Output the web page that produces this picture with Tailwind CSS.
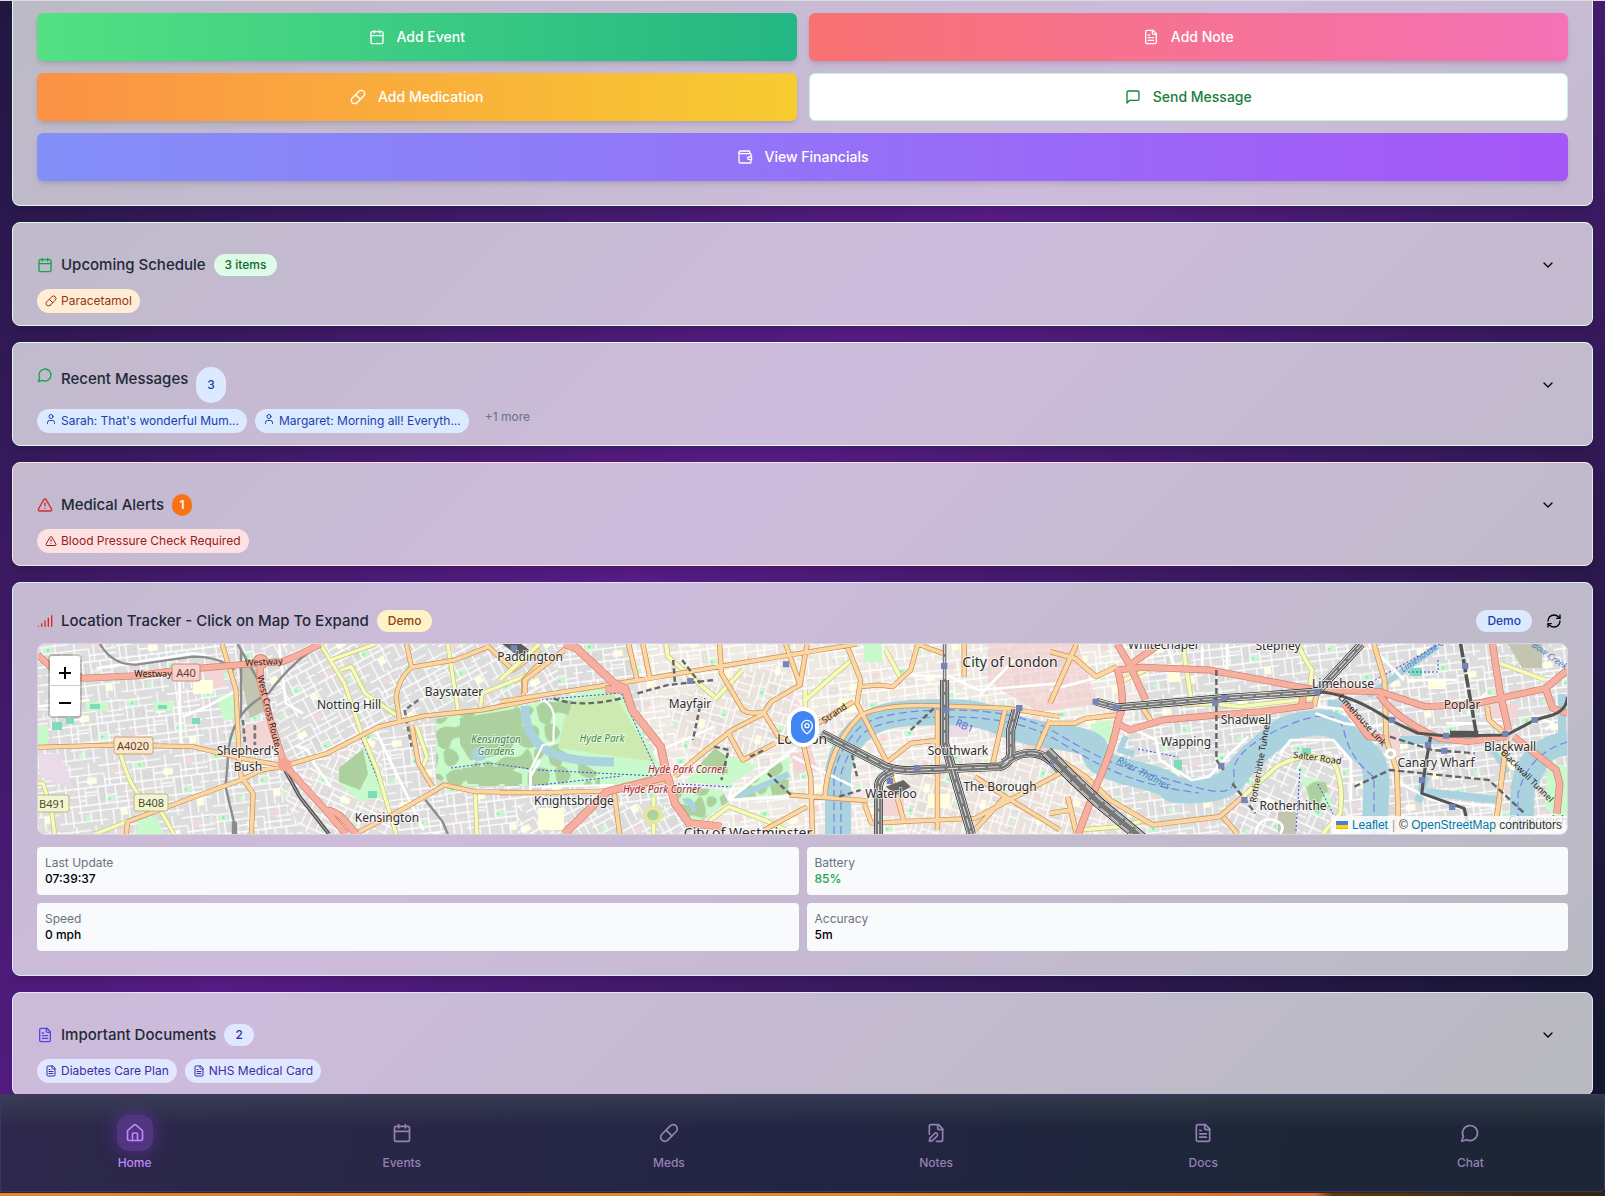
<!DOCTYPE html>
<html lang="en">
<head>
<meta charset="utf-8">
<meta name="viewport" content="width=device-width, initial-scale=1">
<title>Care Dashboard</title>
<script src="https://cdn.jsdelivr.net/npm/@tailwindcss/browser@4"></script>
</head>
<body class="font-['Inter','Noto_Sans',sans-serif] text-black">

<!-- Icon sprite -->
<svg class="hidden" aria-hidden="true">
  <symbol id="calendar" viewBox="0 0 24 24"><path d="M8 2v4M16 2v4M3 10h18"/><rect x="3" y="4" width="18" height="18" rx="2"/></symbol>
  <symbol id="pill" viewBox="0 0 24 24"><path d="m10.5 20.5 10-10a4.95 4.95 0 1 0-7-7l-10 10a4.95 4.95 0 1 0 7 7Z"/><path d="m8.5 8.5 7 7"/></symbol>
  <symbol id="file-text" viewBox="0 0 24 24"><path d="M15 2H6a2 2 0 0 0-2 2v16a2 2 0 0 0 2 2h12a2 2 0 0 0 2-2V7Z"/><path d="M14 2v4a2 2 0 0 0 2 2h4M10 9H8M16 13H8M16 17H8"/></symbol>
  <symbol id="message-square" viewBox="0 0 24 24"><path d="M21 15a2 2 0 0 1-2 2H7l-4 4V5a2 2 0 0 1 2-2h14a2 2 0 0 1 2 2z"/></symbol>
  <symbol id="wallet" viewBox="0 0 24 24"><path d="M19 7V4a1 1 0 0 0-1-1H5a2 2 0 0 0 0 4h15a1 1 0 0 1 1 1v4h-3a2 2 0 0 0 0 4h3a1 1 0 0 0 1-1v-2a1 1 0 0 0-1-1"/><path d="M3 5v14a2 2 0 0 0 2 2h15a1 1 0 0 0 1-1v-4"/></symbol>
  <symbol id="message-circle" viewBox="0 0 24 24"><path d="M7.9 20A9 9 0 1 0 4 16.1L2 22Z"/></symbol>
  <symbol id="user" viewBox="0 0 24 24"><path d="M19 21v-2a4 4 0 0 0-4-4H9a4 4 0 0 0-4 4v2"/><circle cx="12" cy="7" r="4"/></symbol>
  <symbol id="alert" viewBox="0 0 24 24"><path d="m21.73 18-8-14a2 2 0 0 0-3.48 0l-8 14A2 2 0 0 0 4 21h16a2 2 0 0 0 1.73-3"/><path d="M12 9v4M12 17h.01"/></symbol>
  <symbol id="signal" viewBox="0 0 24 24"><path d="M2 20h.01M7 20v-4M12 20v-8M17 20V8M22 4v16"/></symbol>
  <symbol id="refresh" viewBox="0 0 24 24"><path d="M3 12a9 9 0 0 1 9-9 9.75 9.75 0 0 1 6.74 2.74L21 8"/><path d="M21 3v5h-5M21 12a9 9 0 0 1-9 9 9.75 9.75 0 0 1-6.74-2.74L3 16"/><path d="M8 16H3v5"/></symbol>
  <symbol id="house" viewBox="0 0 24 24"><path d="M15 21v-8a1 1 0 0 0-1-1h-4a1 1 0 0 0-1 1v8"/><path d="M3 10a2 2 0 0 1 .709-1.528l7-5.999a2 2 0 0 1 2.582 0l7 5.999A2 2 0 0 1 21 10v9a2 2 0 0 1-2 2H5a2 2 0 0 1-2-2z"/></symbol>
  <symbol id="file-pen" viewBox="0 0 24 24"><path d="M12.5 22H18a2 2 0 0 0 2-2V7l-5-5H6a2 2 0 0 0-2 2v9.500"/><path d="M14 2v4a2 2 0 0 0 2 2h4"/><path d="M13.378 15.626a1 1 0 1 0-3.004-3.004l-5.01 5.012a2 2 0 0 0-.506.854l-.837 2.87a.5.5 0 0 0 .62.62l2.87-.837a2 2 0 0 0 .854-.506z"/></symbol>
  <symbol id="map-pin" viewBox="0 0 24 24"><path d="M20 10c0 4.993-5.539 10.193-7.399 11.799a1 1 0 0 1-1.202 0C9.539 20.193 4 14.993 4 10a8 8 0 0 1 16 0"/><circle cx="12" cy="10" r="3"/></symbol>
  <symbol id="chevron" viewBox="0 0 24 24"><path d="m6 9 6 6 6-6"/></symbol>
</svg>

<div class="flex h-screen flex-col overflow-hidden border-t border-[#dcdcdc] bg-[linear-gradient(135deg,#0f172a_-14%,#581c87_43%,#0f172a_99%)]">
  <main class="flex min-h-0 flex-1 flex-col gap-4 overflow-y-auto px-3 [scrollbar-width:none]">

    <!-- Quick actions -->
    <section aria-label="Quick actions" class="grid shrink-0 grid-cols-2 gap-3 rounded-b-lg border-x border-b border-[#dcfce7] bg-white/70 px-6 pt-3 pb-6 text-sm font-medium shadow-lg">
      <button class="flex h-12 items-center justify-center gap-3 rounded-md bg-linear-to-r/srgb from-[#54e083] to-[#24b683] text-white shadow-md"><svg class="size-4 fill-none stroke-current stroke-2" stroke-linecap="round" stroke-linejoin="round"><use href="#calendar"/></svg>Add Event</button>
      <button class="flex h-12 items-center justify-center gap-3 rounded-md bg-linear-to-r/srgb from-[#f87272] to-[#f472b6] text-white shadow-md"><svg class="size-4 fill-none stroke-current stroke-2" stroke-linecap="round" stroke-linejoin="round"><use href="#file-text"/></svg>Add Note</button>
      <button class="flex h-12 items-center justify-center gap-3 rounded-md bg-linear-to-r/srgb from-[#fb9146] to-[#f7cc30] text-white shadow-md"><svg class="size-4 fill-none stroke-current stroke-2" stroke-linecap="round" stroke-linejoin="round"><use href="#pill"/></svg>Add Medication</button>
      <button class="flex h-12 items-center justify-center gap-3 rounded-md border border-[#bbf7d0] bg-white text-[#15803d]"><svg class="size-4 fill-none stroke-current stroke-2" stroke-linecap="round" stroke-linejoin="round"><use href="#message-square"/></svg>Send Message</button>
      <button class="col-span-2 flex h-12 items-center justify-center gap-3 rounded-md bg-linear-to-r/srgb from-[#838ff8] to-[#a556f7] text-white shadow-md"><svg class="size-4 fill-none stroke-current stroke-2" stroke-linecap="round" stroke-linejoin="round"><use href="#wallet"/></svg>View Financials</button>
    </section>

    <!-- Upcoming schedule -->
    <section class="flex shrink-0 flex-col gap-1.5 rounded-lg border border-[#dcfce7] bg-white/70 px-6 pt-6 pb-3 shadow-lg">
      <div class="flex h-9 items-center gap-2">
        <svg class="size-4 fill-none stroke-[#16a34a] stroke-2" stroke-linecap="round" stroke-linejoin="round"><use href="#calendar"/></svg>
        <h2 class="text-[15px] leading-6 font-medium text-[#1f2937]">Upcoming Schedule</h2>
        <span class="rounded-full bg-[#dcfce7] px-[11px] py-[3px] text-xs font-medium text-[#166534]">3 items</span>
        <button aria-label="Expand schedule" class="ml-auto flex h-9 w-10 items-center justify-center"><svg class="size-4 fill-none stroke-current stroke-2" stroke-linecap="round" stroke-linejoin="round"><use href="#chevron"/></svg></button>
      </div>
      <div class="flex gap-2 text-xs">
        <span class="flex items-center gap-1 rounded-full bg-[#ffedd5] px-2 py-1 text-[#9a3412]"><svg class="size-3 fill-none stroke-current stroke-2" stroke-linecap="round" stroke-linejoin="round"><use href="#pill"/></svg>Paracetamol</span>
      </div>
    </section>

    <!-- Recent messages -->
    <section class="flex shrink-0 flex-col gap-1.5 rounded-lg border border-[#dcfce7] bg-white/70 px-6 pt-6 pb-3 shadow-lg">
      <div class="flex h-9 gap-2">
        <svg class="size-4 fill-none stroke-[#16a34a] stroke-2" stroke-linecap="round" stroke-linejoin="round"><use href="#message-circle"/></svg>
        <h2 class="text-[15px] leading-6 font-medium text-[#1f2937]">Recent Messages</h2>
        <span class="flex items-center rounded-full bg-[#dbeafe] px-[11px] text-xs font-medium text-[#1e40af]">3</span>
        <button aria-label="Expand messages" class="ml-auto flex h-9 w-10 items-center justify-center"><svg class="size-4 fill-none stroke-current stroke-2" stroke-linecap="round" stroke-linejoin="round"><use href="#chevron"/></svg></button>
      </div>
      <div class="flex gap-2 text-xs">
        <span class="flex gap-1 rounded-full bg-[#dbeafe] px-2 py-1 text-[#1e40af]"><svg class="size-3 fill-none stroke-current stroke-2" stroke-linecap="round" stroke-linejoin="round"><use href="#user"/></svg>Sarah: That's wonderful Mum...</span>
        <span class="flex gap-1 rounded-full bg-[#dbeafe] px-2 py-1 text-[#1e40af]"><svg class="size-3 fill-none stroke-current stroke-2" stroke-linecap="round" stroke-linejoin="round"><use href="#user"/></svg>Margaret: Morning all! Everyth...</span>
        <span class="px-2 text-[#6b7280]">+1 more</span>
      </div>
    </section>

    <!-- Medical alerts -->
    <section class="flex shrink-0 flex-col gap-1.5 rounded-lg border border-[#fee2e2] bg-white/70 px-6 pt-6 pb-3 shadow-lg">
      <div class="flex h-9 items-center gap-2">
        <svg class="size-4 fill-none stroke-[#dc2626] stroke-2" stroke-linecap="round" stroke-linejoin="round"><use href="#alert"/></svg>
        <h2 class="text-[15px] leading-6 font-medium text-[#1f2937]">Medical Alerts</h2>
        <span class="w-5 rounded-full bg-[#f97316] py-[3px] text-center text-xs font-semibold text-white">1</span>
        <button aria-label="Expand alerts" class="ml-auto flex h-9 w-10 items-center justify-center"><svg class="size-4 fill-none stroke-current stroke-2" stroke-linecap="round" stroke-linejoin="round"><use href="#chevron"/></svg></button>
      </div>
      <div class="flex gap-2 text-xs">
        <span class="flex items-center gap-1 rounded-full bg-[#fee2e2] px-2 py-1 text-[#991b1b]"><svg class="size-3 fill-none stroke-current stroke-2" stroke-linecap="round" stroke-linejoin="round"><use href="#alert"/></svg>Blood Pressure Check Required</span>
      </div>
    </section>

    <!-- Location tracker -->
    <section class="flex shrink-0 flex-col rounded-lg border border-[#dbeafe] bg-white/70 p-6 shadow-lg">
      <div class="mb-2 flex h-7 items-center gap-2">
        <svg class="size-4 fill-none stroke-[#dc2626] stroke-2" stroke-linecap="round" stroke-linejoin="round"><use href="#signal"/></svg>
        <h2 class="text-[15px] leading-6 font-medium text-[#1f2937]">Location Tracker - Click on Map To Expand</h2>
        <span class="rounded-full bg-[#fef3c7] px-[11px] py-[3px] text-xs font-medium text-[#92400e]">Demo</span>
        <span class="ml-auto rounded-full bg-[#dbeafe] px-[11px] py-[3px] text-xs font-medium text-[#1e40af]">Demo</span>
        <button aria-label="Refresh location" class="flex size-7 items-center justify-center"><svg class="size-4 fill-none stroke-current stroke-2" stroke-linecap="round" stroke-linejoin="round"><use href="#refresh"/></svg></button>
      </div>

      <div class="relative h-48 overflow-hidden rounded-lg border border-[#d8d5e0] bg-[#e0dfdf]">
        <svg class="block size-full" viewBox="0 0 1529 190" preserveAspectRatio="xMidYMid slice" role="img" aria-label="Map of central London">
          <defs>
            <pattern id="st" width="96" height="78" patternUnits="userSpaceOnUse" patternTransform="rotate(-7) scale(.8)">
              <path fill="#c8facc" d="M6 6h10v7h-10zM60 44h12v6h-12zM34 64h6v6h-6z"/><path fill="#ffffe0" d="M40 18h12v8h-12zM78 60h8v9h-8z"/><path fill="#f2dad9" d="M70 8h9v7h-9zM12 46h8v6h-8z"/><path fill="#8fe0c0" d="M10 8h3v3h-3zM63 46h4v2h-4z"/>
              <path d="M0 5H38M0 14H62M0 30H96M4 40H50M0 52H96M24 60H96M0 72H60M4 5V30M12 14V52M20 0V14M28 14V72M36 30V52M44 0V30M52 30V78M56 4H96M62 14V52M68 0V30M76 16H96M74 30V60M82 0V30M84 40H96M88 30V78M68 60V78M78 60V78M8 52V72M17 52V78M40 60V72M92 4V16M28 22H44M62 22H96M36 36H52M62 42H74M28 46H36M74 46H88" stroke="#fff" stroke-width="1.600" fill="none"/>
              <path d="M16 20h8v6h-8zM55 34h4v12h-4zM92 50v8M22 64h4v6M46 66h3v5M84 6h8v6" stroke="#cfcdcb" stroke-width=".8" fill="none"/>
            </pattern>
            <pattern id="st2" href="#st" patternTransform="rotate(-28) scale(.8)"/>
            <pattern id="st3" href="#st" patternTransform="rotate(24) scale(.8)"/>
            <pattern id="st4" href="#st" patternTransform="rotate(-74) scale(.75)"/>
            <pattern id="wood" width="52" height="44" patternUnits="userSpaceOnUse" patternTransform="rotate(-14)"><path fill="#add19e" d="M0 6q8-6 16-2t14-2 6 9-10 8-14 2-12-1zM28 24q6-5 13-3t8 6-4 12-12 4-8-8zM3 27q5-4 9-1t5 8-6 8-9-5zM40 3q5-2 8 2t-3 7-7-3z"/></pattern>
          </defs>
          <rect width="1529" height="190" fill="#dedddd"/>
          <path fill="#efe9e4" d="M590 0H1120L1060 190H640L610 90Z"/>
          <rect width="1529" height="190" fill="url(#st)"/>
          <path fill="#dedddd" d="M225 0H520V50L355 80 250 125ZM480 160H660V190H480ZM1180 190L1190 150 1240 105 1300 110 1310 190Z"/>
          <path fill="url(#st2)" d="M225 0H520V50L355 80 250 125ZM480 160H660V190H480Z"/>
          <path fill="url(#st3)" d="M1180 190L1190 150 1240 105 1300 110 1310 190Z"/>
          <path fill="#e9e2dd" d="M628 55L740 20 770 75 690 130 640 100ZM870 115L1010 115 1100 190H870Z"/>
          <path fill="url(#st4)" d="M628 55L740 20 770 75 690 130 640 100ZM870 115L1010 115 1100 190H870Z"/>
          <path fill="#e3dfdf" d="M240 140L340 90 355 190H265Z"/><path fill="url(#st3)" d="M240 140L340 90 355 190H265Z"/>
          <path fill="#f2d5d5" d="M206 82l28-8 6 30-30 5zM165 28l18-4 5 18-14 3zM840 150h26v22h-26zM752 110l22-4 6 20-22 4zM990 96l26 6-4 16-26-6zM1450 60h30v14h-30zM1350 88h12v26h-12z"/>
          <path fill="#f0cccc" fill-opacity=".6" d="M950 0h90l20 60-60 8-50-30z"/>
          <path fill="#ebdbe8" d="M0 110h22l14 36-34-14zM905 75h25v18h-25z"/>
          <path fill="#c4c5b0" d="M200 20l22 6 8 40-18 8zM1470 0h34v24h-20zM1240 168h18v22h-18z"/>
          <path fill="#ffffe0" d="M155 36h20v14h-20zM500 164h26v22h-26zM1130 20h12v18h-12zM800 55h18v12h-18zM1390 35h18v10h-18zM890 150h22v14h-22z"/>

          <!-- parks -->
          <path fill="#c8facc" d="M398 75L460 64 506 58 560 44 585 52 620 118 628 132 562 142 420 142 398 135ZM647 138L677 104 690 112 720 122 690 142ZM696 154L706 142 752 112 750 150ZM636 142L684 146 690 158 662 178 646 170ZM301 124L325 105 336 110 348 152 322 158 301 138ZM100 176l18-4 8 18h-28zM48 58h22v9h-22zM115 58h20v9h-20zM178 52l18-3 8 24-18 4zM1052 80l20-4 6 20-20 2zM1262 132l26 6 6 26-18 4zM826 0h18v18h-18zM0 82h10v20h-10zM1510 120q12-2 19 4v50q-18 0-22-14z"/>
          <path fill="#cdebb0" d="M530 58L575 49 618 118 520 104Z"/>
          <path fill="url(#wood)" d="M398 75L460 64 506 58 535 56 520 104 562 130 562 142 420 142 398 135ZM696 154L706 142 752 112 750 150ZM636 142L684 146 690 158 662 178 646 170ZM1262 132l26 6 6 26-18 4z"/>
          <path fill="#add19e" d="M301 124L325 105 330 130 322 146 301 138ZM662 120L677 104 688 112 690 130ZM422 74l60-10 2 22-14 24-38 6-10-16zM424 124l40-2 20 8v10h-54z"/>
          <path fill="#7fdcb8" d="M330 147h9v7h-9zM14 78h10v8h-10zM28 74h8v6h-8zM52 60h10v5h-10zM120 61h9v4h-9zM154 74h8v6h-8zM1136 116h8v10h-8zM1372 24h12v8h-12zM1264 104h9v6h-9z"/>

          <!-- water -->
          <g fill="none" stroke="#aad3df" stroke-linejoin="round">
            <path stroke-width="26" d="M800 192V129Q803 105 819 89Q835 74 855 71T908 68T962 78T1022 93T1058 109T1093 129T1132 143T1161 146T1196 133T1221 106T1246 86T1274 79T1306 89T1327 109T1338 133T1336 190"/>
            <path stroke-width="24" d="M1484 190V160Q1484 125 1500 112T1530 100M1482 150L1505 105"/>
            <path stroke-width="9" d="M487 62Q487 90 505 104T576 118"/>
            <path stroke-width="6" d="M699 152Q726 142 751 130M646 158q8-4 10 10M1330 52L1400 2M1450 100L1470 128M1088 92L1082 106 1096 110"/>
            <path stroke-width="8" d="M1362 96H1440M1388 148L1460 156M1388 132L1380 158M1290 60h22M1524 50v40"/>
          </g>
          <ellipse cx="441" cy="110" rx="8" ry="7" fill="#aad3df"/>
          <g fill="none" stroke="#7d82e8" stroke-width="1.200" stroke-dasharray="8 4">
            <path d="M796 190V129Q802 105 819 86T908 66T1022 91T1093 125T1161 144T1196 131T1246 83T1306 87T1336 133V190M803 190V130Q808 112 822 93T908 73T1022 98T1093 134T1161 149"/>
            <path d="M1480 190V150Q1490 110 1529 98"/>
          </g>
          <g fill="none" stroke="#3a45e8" stroke-width="1" stroke-dasharray="2 2">
            <path d="M323 94L353 169M413 124L451 119 500 126 618 132M500 56L583 49 620 130M492 142L584 132M640 140L695 143M1330 40L1402 0M1370 28h30v-12M1280 140l24 48M1262 125l-4 62M1100 105l40 8"/>
          </g>

          <!-- western sheet -->
          <g transform="matrix(.3444 0 0 .3333 -38 -14)" fill="none" stroke-linejoin="round">
            <path stroke="#fff" stroke-width="8" d="M280 115L560 70 600 75M520 120L525 340M530 260L600 230 690 180M810 42L830 220 880 250M1090 300L1230 600M110 230L260 210M860 350Q900 350 905 390L960 470M1568 390L1540 440 1540 480"/>
            <path stroke="#c3c67c" stroke-width="14" d="M350 370Q370 450 400 490L465 540 505 612M110 460L125 460 150 540 158 612M930 42L1000 160 1050 310 1095 420 1150 612M990 120L1020 110 1060 190 1150 255M1300 42L1330 240M1395 230L1400 190 1568 120M1380 490L1385 612M1210 290L1240 380 1228 410M960 90L1090 42M275 612L370 575"/><path stroke="#f6fabb" stroke-width="10" d="M350 370Q370 450 400 490L465 540 505 612M110 460L125 460 150 540 158 612M930 42L1000 160 1050 310 1095 420 1150 612M990 120L1020 110 1060 190 1150 255M1300 42L1330 240M1395 230L1400 190 1568 120M1380 490L1385 612M1210 290L1240 380 1228 410M960 90L1090 42M275 612L370 575"/>
            <path stroke="#8c8c8c" stroke-width="7" d="M290 42Q330 110 400 103L560 80Q640 80 680 120M930 50Q860 80 780 190Q680 240 665 350L655 470 680 580M690 42L760 170M700 60L700 260M1235 510L1285 575 1300 612"/>
            <path stroke="#8c8c8c" stroke-width="16" d="M681 575V612"/>
            <path stroke="#777" stroke-width="8" stroke-dasharray="16 9" d="M705 270L712 345M740 285V345M1215 210L1175 240 1195 350"/>
            <path stroke="#c6914d" stroke-width="15" d="M110 352L330 345 560 350 700 385 826 408 950 370 1100 290 1160 275 1230 258 1400 240 1568 205M370 575L540 510 700 450 760 420 826 408M645 42L685 180 695 390 700 440 735 490 730 612M370 575L367 612M1030 612L1130 560 1250 490 1290 465 1380 485 1568 488M1160 270L1150 200Q1160 140 1195 112L1320 90 1420 50M1180 42L1195 112M1195 285L1215 400 1255 470M1410 42L1490 120 1568 60M1520 200V150L1568 100"/>
            <path stroke="#fcd6a4" stroke-width="11" d="M110 352L330 345 560 350 700 385 826 408 950 370 1100 290 1160 275 1230 258 1400 240 1568 205M370 575L540 510 700 450 760 420 826 408M645 42L685 180 695 390 700 440 735 490 730 612M370 575L367 612M1030 612L1130 560 1250 490 1290 465 1380 485 1568 488M1160 270L1150 200Q1160 140 1195 112L1320 90 1420 50M1180 42L1195 112M1195 285L1215 400 1255 470M1410 42L1490 120 1568 60M1520 200V150L1568 100"/>
            <path stroke="#555" stroke-width="11" d="M822 410L870 500 955 612"/><path stroke="#aaa" stroke-width="3" d="M822 410L870 500 955 612"/>
            <path stroke="#d47f70" stroke-width="21" d="M110 75L145 108 240 145 400 137 520 120 720 102 820 95Q870 75 930 42M757 95L755 150 790 290 826 405 945 540 1005 612M945 540Q975 540 1000 570L1035 612"/>
            <circle cx="757" cy="95" r="16" stroke="#d47f70" stroke-width="14"/>
            <path stroke="#f7b09f" stroke-width="17" d="M110 75L145 108 240 145 400 137 520 120 720 102 820 95Q870 75 930 42M757 95L755 150 790 290 826 405 945 540 1005 612M945 540Q975 540 1000 570L1035 612"/>
            <circle cx="757" cy="95" r="14" stroke="#f7b09f" stroke-width="12"/><circle cx="826" cy="404" r="20" fill="#f7a394"/>
            <path fill="#5c5c5c" d="M1458 42h56l30 24-44 8z"/>
          </g>

          <!-- central sheet -->
          <g transform="matrix(.3571 0 0 .3333 462 -14)" fill="none" stroke-linejoin="round">
            <path stroke="#fff" stroke-width="8" d="M640 510L830 350M640 510L810 500M640 510L650 470M1120 135L1260 140 1340 180 1568 160M1340 200L1440 90M430 370L600 290M820 380L990 470"/>
            <path stroke="#fff" stroke-width="6" d="M120 210Q160 230 150 300L150 340 120 345 85 420 85 470 320 465"/>
            <path stroke="#c3c67c" stroke-width="15" d="M465 42L470 80 600 200M600 210L680 120M0 150L110 42M850 215L940 130 985 90M855 240V180M1080 60L1120 140M430 612V580M430 530V500M580 600L590 570 640 530 740 570 800 600"/><path stroke="#f6fabb" stroke-width="11" d="M465 42L470 80 600 200M600 210L680 120M0 150L110 42M850 215L940 130 985 90M855 240V180M1080 60L1120 140M430 612V580M430 530V500M580 600L590 570 640 530 740 570 800 600"/>
            <circle cx="428" cy="555" r="22" stroke="#e4e79c" stroke-width="12" fill="#add19e"/>
            <path stroke="#c6914d" stroke-width="15" d="M0 215L300 165 420 145 640 105 840 70 1000 42M490 440L560 375 650 300 740 250 780 320 850 345 870 440 875 612M615 42L620 130 680 240Q700 255 740 245L760 215 840 165 860 42M800 42L840 165M360 42L385 155M400 42L420 145M970 42L1010 150 1000 220 1085 400 1130 570M1010 170L1060 165 1100 170 1150 120 1170 42 1240 70M890 280L990 215M910 500Q920 350 1010 255Q1080 220 1240 228L1420 235 1568 260M810 495L1030 512M1080 400L1150 340 1230 330M1225 600V240M1415 235L1380 400M1500 370L1540 270M1120 575L1330 565 1480 480 1568 430M1415 500L1568 600M1330 600L1415 500 1330 440M640 310L680 390 770 340M740 600L860 530M0 488L130 488 320 482 460 455M320 490L335 612M1300 42V140M70 190V150L180 60M1020 520L1040 580 1130 575"/>
            <path stroke="#fcd6a4" stroke-width="11" d="M0 215L300 165 420 145 640 105 840 70 1000 42M490 440L560 375 650 300 740 250 780 320 850 345 870 440 875 612M615 42L620 130 680 240Q700 255 740 245L760 215 840 165 860 42M800 42L840 165M360 42L385 155M400 42L420 145M970 42L1010 150 1000 220 1085 400 1130 570M1010 170L1060 165 1100 170 1150 120 1170 42 1240 70M890 280L990 215M910 500Q920 350 1010 255Q1080 220 1240 228L1420 235 1568 260M810 495L1030 512M1080 400L1150 340 1230 330M1225 600V240M1415 235L1380 400M1500 370L1540 270M1120 575L1330 565 1480 480 1568 430M1415 500L1568 600M1330 600L1415 500 1330 440M640 310L680 390 770 340M740 600L860 530M0 488L130 488 320 482 460 455M320 490L335 612M1300 42V140M70 190V150L180 60M1020 520L1040 580 1130 575"/>
            <path stroke="#d47f70" stroke-width="24" d="M180 42L215 55 320 160 350 175 370 240 450 350 468 440 300 485 180 612M470 440L490 520 530 580 620 590M295 178H350"/>
            <path stroke="#f7b09f" stroke-width="20" d="M180 42L215 55 320 160 350 175 370 240 450 350 468 440 300 485 180 612M470 440L490 520 530 580 620 590M295 178H350"/>
            <path stroke="#666" stroke-width="7" stroke-dasharray="16 9" d="M150 205Q220 235 340 205M385 190L470 165 600 150M485 90L490 160M510 90L560 160M600 350L640 360 620 450M700 380L740 360M1150 300L1220 230M950 500L1010 480M560 230L540 330M750 430L820 500M980 350L1000 440"/>
            <g><path stroke="#222" stroke-width="25" d="M900 310L1080 410Q1120 425 1170 420L1400 410Q1435 400 1430 350V300L1445 240M1410 400Q1500 330 1568 420M1245 150V340L1270 430 1320 612M1060 612V470Q1060 440 1100 425"/><path stroke="#f0f0f0" stroke-width="21" d="M900 310L1080 410Q1120 425 1170 420L1400 410Q1435 400 1430 350V300L1445 240M1410 400Q1500 330 1568 420M1245 150V340L1270 430 1320 612M1060 612V470Q1060 440 1100 425"/><path stroke="#777" stroke-width="17" d="M900 310L1080 410Q1120 425 1170 420L1400 410Q1435 400 1430 350V300L1445 240M1410 400Q1500 330 1568 420M1245 150V340L1270 430 1320 612M1060 612V470Q1060 440 1100 425"/><path stroke="#777" stroke-width="10" d="M1245 42V160"/><path stroke="#ddd" stroke-width="3" stroke-dasharray="30 8" d="M900 310L1080 410Q1120 425 1170 420L1400 410Q1435 400 1430 350V300L1445 240M1410 400Q1500 330 1568 420M1245 42V340L1270 430 1320 612M1060 612V470Q1060 440 1100 425"/></g>
            <path fill="#666" d="M1080 470l50-20 20 20-40 25z"/>
            <path fill="#7684b8" d="M524 144h18v18h-18zM792 94h18v18h-18zM1235 99h18v18h-18zM1240 231h18v18h-18zM1445 225h18v18h-18zM1083 444h18v18h-18zM1159 405h18v18h-18zM1534 387h18v18h-18zM30 46h18v18h-18z"/>
          </g>

          <!-- eastern sheet -->
          <g transform="matrix(.354 0 0 .3333 1012 -64)" fill="none" stroke-linejoin="round">
            <path stroke="#fff" stroke-width="8" d="M0 330L180 280M330 192L350 260M430 200V260M500 192V270M200 430L300 480 310 540 400 600 450 590 500 530 560 470M650 520L680 480 800 480 850 540 850 660M580 762Q590 710 630 720T650 762M750 400L830 430 900 440 960 430M960 520L990 610 1080 660 1260 680M900 192L1000 300M1010 300H1150M1230 340L1180 400M1290 430H1120M1370 410L1420 430 1400 450M760 340V380L850 390"/>
            <path stroke="#c3c67c" stroke-width="15" d="M80 750L200 740 270 720M545 650L640 560Q720 510 800 545Q830 600 820 700L770 762M375 192L400 370M270 372H460L540 380 740 355M700 192Q720 240 740 270L735 320M1270 250L1400 300M190 310L290 260"/><path stroke="#f6fabb" stroke-width="11" d="M80 750L200 740 270 720M545 650L640 560Q720 510 800 545Q830 600 820 700L770 762M375 192L400 370M270 372H460L540 380 740 355M700 192Q720 240 740 270L735 320M1270 250L1400 300M190 310L290 260"/>
            <path stroke="#c6914d" stroke-width="16" d="M0 215L70 235 130 290 190 260M75 192L0 370M0 430H70L100 415 190 405M0 520L100 590 170 660 290 735 480 710 545 650M915 192L945 300 950 480 980 570 985 762M1290 470L1285 520 1265 690 1250 762M260 380L290 430M490 712L530 762M1235 380L1240 420 1290 465M50 650L75 762M755 340L745 380M0 700L60 690"/>
            <path stroke="#fcd6a4" stroke-width="12" d="M0 215L70 235 130 290 190 260M75 192L0 370M0 430H70L100 415 190 405M0 520L100 590 170 660 290 735 480 710 545 650M915 192L945 300 950 480 980 570 985 762M1290 470L1285 520 1265 690 1250 762M260 380L290 430M490 712L530 762M1235 380L1240 420 1290 465M50 650L75 762M755 340L745 380M0 700L60 690"/>
            <path stroke="#d47f70" stroke-width="21" d="M190 192L225 255 270 360M225 255L300 200M190 270L260 262 450 270 700 320 755 330 930 335 1060 380 1200 372 1400 325 1462 270M190 265Q205 320 205 380L190 430Q180 500 130 620L80 762M190 430L225 450 320 420 470 405 600 395 745 375M715 350L710 385M930 345Q980 420 1100 475L1180 485 1290 470M1250 192L1270 330 1295 450M1400 325L1420 385 1462 400M1310 470L1430 570 1440 612 1432 700M830 370L900 470 945 475"/>
            <path stroke="#f7b09f" stroke-width="17" d="M190 192L225 255 270 360M225 255L300 200M190 270L260 262 450 270 700 320 755 330 930 335 1060 380 1200 372 1400 325 1462 270M190 265Q205 320 205 380L190 430Q180 500 130 620L80 762M190 430L225 450 320 420 470 405 600 395 745 375M715 350L710 385M930 345Q980 420 1100 475L1180 485 1290 470M1250 192L1270 330 1295 450M1400 325L1420 385 1462 400M1310 470L1430 570 1440 612 1432 700M830 370L900 470 945 475"/>
            <path stroke="#222" stroke-width="23" d="M130 365L190 382 480 355 755 335 880 192"/><path stroke="#f0f0f0" stroke-width="19" d="M130 365L190 382 480 355 755 335 880 192"/><path stroke="#777" stroke-width="14" d="M130 365L190 382 480 355 755 335 880 192"/><path stroke="#ddd" stroke-width="3" stroke-dasharray="30 8" d="M130 365L190 382 480 355 755 335 880 192"/>
            <path stroke="#222" stroke-width="34" d="M-10 515L60 590 140 670 260 775"/><path stroke="#eee" stroke-width="29" d="M-10 515L60 590 140 670 260 775"/><path stroke="#777" stroke-width="25" d="M-10 515L60 590 140 670 260 775"/><path stroke="#ddd" stroke-width="3" stroke-dasharray="30 8" d="M-16 522L54 597 134 677 254 782M-4 508L66 583 146 663 266 768"/>
            <path stroke="#555" stroke-width="9" d="M755 335Q850 340 960 420L1040 460 1120 468 1290 465 1370 420 1420 405Q1460 390 1462 350M1075 470L1060 560 1050 640 1170 685 1180 730"/>
            <path stroke="#555" stroke-width="10" stroke-dasharray="40 6" d="M1160 192L1205 465"/><path stroke="#555" stroke-width="20" d="M1130 462H1210"/>
            <path stroke="#666" stroke-width="7" stroke-dasharray="18 9" d="M470 270V540L490 570M515 610L580 700M960 470L1080 510 1200 520M860 620L960 570 1240 600 1340 700"/>
            <path fill="#7684b8" d="M120 356h18v18h-18zM178 374h18v18h-18zM458 360h18v18h-18zM483 345h18v18h-18zM746 328h18v18h-18zM958 411h18v18h-18zM1110 458h18v18h-18zM1059 486h18v18h-18zM1105 503h18v18h-18zM1277 453h18v18h-18zM1360 411h18v18h-18zM1164 249h18v18h-18zM1042 591h18v18h-18zM1127 672h18v18h-18zM475 548h18v18h-18zM540 651h18v18h-18zM0 540h10v18h-10z"/>
            <circle cx="962" cy="521" r="12" stroke="#fff" stroke-width="9" fill="#ccc"/>
          </g>

          <!-- road shields -->
          <g stroke-width="1">
            <rect x="134" y="20" width="28" height="17" rx="2" fill="#f5d3cc" stroke="#cf8a7c"/>
            <rect x="76" y="93" width="39" height="17" rx="2" fill="#fae6cf" stroke="#c9a069"/>
            <rect x="96" y="150" width="34" height="17" rx="2" fill="#f3f3d6" stroke="#b9bb78"/>
            <rect x="-3" y="151" width="34" height="17" rx="2" fill="#f3f3d6" stroke="#b9bb78"/>
          </g>
          <g class="font-['Noto_Sans',sans-serif] text-[11px]" text-anchor="middle">
            <text x="148" y="33" fill="#6b3a33">A40</text><text x="95" y="106" fill="#5f4420">A4020</text><text x="113" y="163" fill="#4d4f1d">B408</text><text x="14" y="164" fill="#4d4f1d">B491</text>
          </g>

          <!-- place names -->
          <g class="font-['Noto_Sans',sans-serif] text-xs" text-anchor="middle" fill="#2e2e2e" stroke="#ffffffa0" stroke-width="2" paint-order="stroke" stroke-linejoin="round">
            <text x="210" y="111">Shepherd's</text><text x="210" y="127">Bush</text><text x="349" y="178">Kensington</text><text x="311" y="65">Notting Hill</text><text x="416" y="52">Bayswater</text><text x="492" y="17">Paddington</text><text x="652" y="64">Mayfair</text><text x="536" y="161">Knightsbridge</text><text x="920" y="111">Southwark</text><text x="853" y="154">Waterloo</text><text x="962" y="147">The Borough</text><text x="1125" y="5">Whitechapel</text><text x="1240" y="6">Stepney</text><text x="1305" y="44">Limehouse</text><text x="1208" y="80">Shadwell</text><text x="1148" y="102">Wapping</text><text x="1255" y="166">Rotherhithe</text><text x="1424" y="65">Poplar</text><text x="1398" y="123">Canary Wharf</text><text x="1472" y="107">Blackwall</text><text x="1500" y="181">Greenwich</text>
            <g class="text-sm"><text x="972" y="23">City of London</text><text x="764" y="100">London</text><text x="710" y="194">City of Westminster</text></g>
            <g class="text-[10px] italic" fill="#3d8b4a"><text x="458" y="99">Kensington</text><text x="458" y="111">Gardens</text><text x="564" y="98">Hyde Park</text></g>
            <g class="text-[10px] italic" fill="#a8202e"><text x="649" y="129">Hyde Park Corner</text><text x="624" y="149">Hyde Park Corner</text></g>
          </g>
          <g class="font-['Noto_Sans',sans-serif] text-[9px]" text-anchor="middle" fill="#2b2020">
            <text x="115" y="33">Westway</text><text transform="translate(226 21) rotate(-3)">Westway</text><text transform="translate(228 68) rotate(76)">West Cross Route</text><text transform="translate(798 72) rotate(-35)">Strand</text><text transform="translate(1225 119) rotate(-80)">Rotherhithe Tunnel</text><text transform="translate(1279 117) rotate(8)">Salter Road</text><text transform="translate(1322 78) rotate(48)">Limehouse Link</text><text transform="translate(1487 134) rotate(45)">Blackwall Tunnel</text>
            <g fill="#4a7fc4" class="italic"><text transform="translate(1104 132) rotate(28)" class="text-[10px]">River Thames</text><text transform="translate(1389 12) rotate(-35)">Limehouse Cut</text><text transform="translate(1510 14) rotate(35)">Bow Creek</text></g>
            <text transform="translate(925 85) rotate(25)" fill="#5b62dd" class="text-[10px]">RB1</text>
          </g>
        </svg>

        <div class="absolute top-2.5 left-2.5 flex flex-col rounded-sm border-2 border-black/20 bg-white bg-clip-padding">
          <button aria-label="Zoom in" class="flex h-[30px] w-[30px] items-center justify-center border-b border-[#ccc] pt-1"><svg class="size-3 stroke-black stroke-2" viewBox="0 0 12 12"><path d="M6 0v12M0 6h12"/></svg></button>
          <button aria-label="Zoom out" class="flex h-[30px] w-[30px] items-center justify-center pt-1"><svg class="size-3 stroke-black stroke-2" viewBox="0 0 12 12"><path d="M0 6h12"/></svg></button>
        </div>
        <div class="absolute top-[63px] left-1/2 flex h-10 w-8 -translate-x-1/2 items-center justify-end rounded-full border-4 border-white bg-[#4285f4] shadow"><svg class="size-4 fill-none stroke-white stroke-2"><use href="#map-pin"/></svg></div>
        <div class="absolute right-0 bottom-0 flex items-center gap-1 bg-white/80 px-[5px] font-['Liberation_Sans',sans-serif] text-xs leading-[18px] text-[#333]">
          <a href="#leaflet" class="flex items-center gap-1 text-[#0078a8]"><svg class="h-2 w-3" viewBox="0 0 12 8"><path fill="#4c7be1" d="M0 0h12v4H0z"/><path fill="#ffd500" d="M0 4h12v3H0z"/><path fill="#e0bc00" d="M0 7h12v1H0z"/></svg>Leaflet</a>
          <span class="text-[#999]">|</span>
          <span>© <a href="#osm" class="text-[#0078a8]">OpenStreetMap</a> contributors</span>
        </div>
      </div>

      <dl class="mt-3 grid grid-cols-2 gap-2 text-xs">
        <div class="rounded-sm bg-[#f9fafb] p-2"><dt class="text-[#6b7280]">Last Update</dt><dd class="font-medium">07:39:37</dd></div>
        <div class="rounded-sm bg-[#f9fafb] p-2"><dt class="text-[#6b7280]">Battery</dt><dd class="font-medium text-[#16a34a]">85%</dd></div>
        <div class="rounded-sm bg-[#f9fafb] p-2"><dt class="text-[#6b7280]">Speed</dt><dd class="font-medium">0 mph</dd></div>
        <div class="rounded-sm bg-[#f9fafb] p-2"><dt class="text-[#6b7280]">Accuracy</dt><dd class="font-medium">5m</dd></div>
      </dl>
    </section>

    <!-- Important documents -->
    <section class="flex shrink-0 flex-col gap-1.5 rounded-lg border border-[#e0e7ff] bg-white/70 px-6 pt-6 pb-3 shadow-lg">
      <div class="flex h-9 items-center gap-2">
        <svg class="size-4 fill-none stroke-[#4f46e5] stroke-2" stroke-linecap="round" stroke-linejoin="round"><use href="#file-text"/></svg>
        <h2 class="text-[15px] leading-6 font-medium text-[#1f2937]">Important Documents</h2>
        <span class="rounded-full bg-[#e0e7ff] px-[11px] py-[3px] text-xs font-medium text-[#3730a3]">2</span>
        <button aria-label="Expand documents" class="ml-auto flex h-9 w-10 items-center justify-center"><svg class="size-4 fill-none stroke-current stroke-2" stroke-linecap="round" stroke-linejoin="round"><use href="#chevron"/></svg></button>
      </div>
      <div class="flex gap-2 text-xs">
        <span class="flex items-center gap-1 rounded-full bg-[#e0e7ff] px-2 py-1 text-[#3730a3]"><svg class="size-3 fill-none stroke-current stroke-2" stroke-linecap="round" stroke-linejoin="round"><use href="#file-text"/></svg>Diabetes Care Plan</span>
        <span class="flex items-center gap-1 rounded-full bg-[#e0e7ff] px-2 py-1 text-[#3730a3]"><svg class="size-3 fill-none stroke-current stroke-2" stroke-linecap="round" stroke-linejoin="round"><use href="#file-text"/></svg>NHS Medical Card</span>
      </div>
    </section>
  </main>

  <!-- Bottom navigation -->
  <nav aria-label="Main" class="grid shrink-0 grid-cols-6 rounded-b border border-[#3d3568] bg-[linear-gradient(to_bottom,rgba(90,105,105,0.3),rgba(90,105,105,0)_34%),linear-gradient(100deg,#2d284b,#232544_50%,#1d2637_80%)] py-5 text-xs font-medium text-[#9580b3]">
    <a href="#home" class="flex flex-col items-center gap-1 text-[#c084fc]"><span class="rounded-xl bg-[#513580] p-2 shadow-[0_0_20px_rgba(147,71,234,0.4)]"><svg class="size-5 fill-none stroke-current stroke-2" stroke-linecap="round" stroke-linejoin="round"><use href="#house"/></svg></span>Home</a>
    <a href="#events" class="flex flex-col items-center gap-1"><span class="p-2"><svg class="size-5 fill-none stroke-current stroke-2" stroke-linecap="round" stroke-linejoin="round"><use href="#calendar"/></svg></span>Events</a>
    <a href="#meds" class="flex flex-col items-center gap-1"><span class="p-2"><svg class="size-5 fill-none stroke-current stroke-2" stroke-linecap="round" stroke-linejoin="round"><use href="#pill"/></svg></span>Meds</a>
    <a href="#notes" class="flex flex-col items-center gap-1"><span class="p-2"><svg class="size-5 fill-none stroke-current stroke-2" stroke-linecap="round" stroke-linejoin="round"><use href="#file-pen"/></svg></span>Notes</a>
    <a href="#docs" class="flex flex-col items-center gap-1"><span class="p-2"><svg class="size-5 fill-none stroke-current stroke-2" stroke-linecap="round" stroke-linejoin="round"><use href="#file-text"/></svg></span>Docs</a>
    <a href="#chat" class="flex flex-col items-center gap-1"><span class="p-2"><svg class="size-5 fill-none stroke-current stroke-2" stroke-linecap="round" stroke-linejoin="round"><use href="#message-circle"/></svg></span>Chat</a>
  </nav>
  <div class="h-1 shrink-0 border-t border-[#3a2418] bg-[linear-gradient(to_right,#e08a30,#de7a35_20%,#e0902c_45%,#dd7c32_65%,#d57038_82%,#5a3a10_83%,#2c2608)]"></div>
</div>
</body>
</html>
